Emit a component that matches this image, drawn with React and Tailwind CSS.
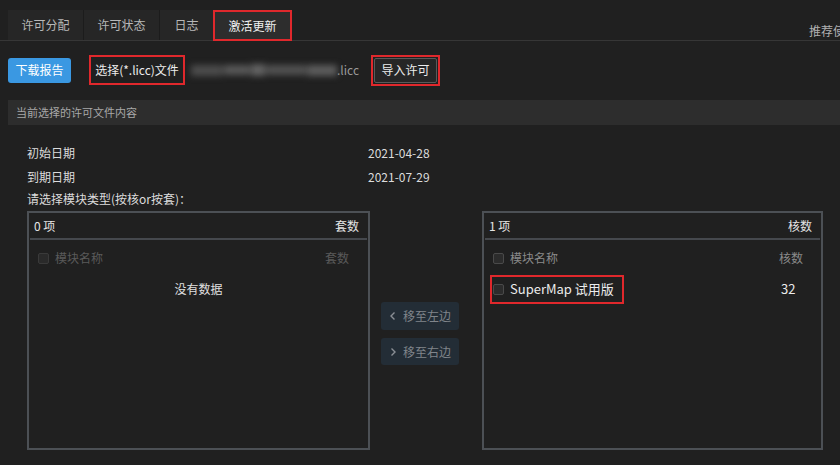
import React from "react";

const font = { fontFamily: '"Noto Sans CJK SC", "Noto Sans", sans-serif' };

function Check({ dim }) {
  return (
    <span
      className={`inline-block shrink-0 w-[11px] h-[11px] rounded-[2px] border ${
        dim ? "border-[#3a3a3a] bg-[#2a2a2a]" : "border-[#4a4a4a] bg-[#2c2c2c]"
      }`}
    />
  );
}

function Chevron({ dir }) {
  return (
    <svg width="8" height="10" viewBox="0 0 8 10" className="mr-[6px]">
      <path
        d={dir === "left" ? "M5.5 1.5 L2 5 L5.5 8.5" : "M2.5 1.5 L6 5 L2.5 8.5"}
        fill="none"
        stroke="#8a8f95"
        strokeWidth="1.4"
      />
    </svg>
  );
}

export default function App() {
  return (
    <div
      className="w-[840px] h-[465px] bg-[#202020] overflow-hidden text-[12px] text-[#dcdcdc]"
      style={font}
    >
      {/* Tabs */}
      <div className="pt-[10px] flex border-b border-[#363636] pl-2 whitespace-nowrap">
        <div className="flex bg-[#262626]">
          <div className="w-[76px] h-[30px] flex items-center justify-center text-[#b8b8b8] border-r border-[#1c1c1c]">
            许可分配
          </div>
          <div className="w-[76px] h-[30px] flex items-center justify-center text-[#b8b8b8] border-r border-[#1c1c1c]">
            许可状态
          </div>
          <div className="w-[53px] h-[30px] flex items-center justify-center text-[#b8b8b8]">
            日志
          </div>
          <div className="w-[79px] h-[31px] -mb-px flex items-center justify-center text-[#f0f0f0] bg-[#2d2d2d] border-2 border-[#e0282c]">
            激活更新
          </div>
        </div>
        <div className="ml-[517px] pt-[12px] text-[#b0b0b0] text-[12px]">推荐使用配置</div>
      </div>

      {/* Toolbar */}
      <div className="mt-[14px] flex items-center pl-2 h-[30px] whitespace-nowrap">
        <button className="w-[63px] h-[25px] rounded-[3px] bg-[#3a98e2] text-white text-[12px]">
          下载报告
        </button>
        <div className="ml-[18px] w-[96px] h-[30px] border-2 border-[#e0282c] flex items-center justify-center text-[#ececec]">
          选择(*.licc)文件
        </div>
        <div className="ml-[6px] w-[146px] h-[14px] flex items-center gap-[1px] blur-[3px]">
          <div className="w-[32px] h-[11px] bg-[#4c4c4c]" />
          <div className="w-[26px] h-[10px] bg-[#585858]" />
          <div className="w-[14px] h-[12px] bg-[#626262]" />
          <div className="w-[40px] h-[10px] bg-[#525252]" />
          <div className="w-[30px] h-[11px] bg-[#5c5c5c]" />
        </div>
        <span className="text-[#9a9a9a]">.licc</span>
        <div className="ml-[12px] w-[69px] h-[31px] border-2 border-[#e0282c] flex items-center justify-center">
          <div className="w-[63px] h-[25px] border border-[#5a5a5a] rounded-[2px] bg-[#262626] flex items-center justify-center text-[#ececec]">
            导入许可
          </div>
        </div>
      </div>

      {/* Section header */}
      <div className="mt-[15px] ml-2 h-[25px] bg-[#2d2d2d] flex items-center pl-[8px] text-[11px] text-[#a8a8a8]">
        当前选择的许可文件内容
      </div>

      {/* Dates */}
      <div className="pl-[27px] mt-[16px] text-[#dcdcdc]">
        <div className="flex h-[24px] items-center">
          <span className="w-[341px]">初始日期</span>
          <span>2021-04-28</span>
        </div>
        <div className="flex h-[24px] items-center">
          <span className="w-[341px]">到期日期</span>
          <span>2021-07-29</span>
        </div>
        <div className="h-[20px] flex items-center">请选择模块类型(按核or按套)：</div>
      </div>

      {/* Transfer */}
      <div className="flex pl-[27px] mt-[2px]">
        {/* Left box */}
        <div className="w-[343px] h-[239px] border-2 border-[#4c5055] flex flex-col">
          <div className="h-[25px] flex items-center justify-between pl-[5px] pr-[9px] text-[#e4e4e4]">
            <span>0 项</span>
            <span>套数</span>
          </div>
          <div className="mx-[1px] h-[2px] bg-[#45484d]" />
          <div className="h-[36px] flex items-center pl-[9px] pr-[19px] text-[#5a5a5a]">
            <Check dim />
            <span className="ml-[6px]">模块名称</span>
            <span className="ml-auto">套数</span>
          </div>
          <div className="h-[26px] flex items-center justify-center text-[#e0e0e0]">没有数据</div>
        </div>

        {/* Middle */}
        <div className="w-[112px] flex flex-col items-start pl-[11px] pt-[91px] gap-[8px]">
          <div className="w-[78px] h-[28px] rounded-[3px] bg-[#232d36] flex items-center justify-center text-[#80858b]">
            <Chevron dir="left" />
            移至左边
          </div>
          <div className="w-[78px] h-[27px] rounded-[3px] bg-[#232d36] flex items-center justify-center text-[#80858b]">
            <Chevron dir="right" />
            移至右边
          </div>
        </div>

        {/* Right box */}
        <div className="w-[341px] h-[239px] border-2 border-[#4c5055] flex flex-col">
          <div className="h-[25px] flex items-center justify-between pl-[5px] pr-[9px] text-[#e4e4e4]">
            <span>1 项</span>
            <span>核数</span>
          </div>
          <div className="mx-[1px] h-[2px] bg-[#45484d]" />
          <div className="h-[36px] flex items-center pl-[9px] pr-[18px] text-[#8a8a8a]">
            <Check />
            <span className="ml-[6px]">模块名称</span>
            <span className="ml-auto">核数</span>
          </div>
          <div className="flex items-center h-[26px] pl-[6px] pr-[18px]">
            <div className="w-[134px] h-[29px] border-2 border-[#e0282c] flex items-center pl-[1px]">
              <Check />
              <span className="ml-[6px] text-[13px] text-[#ececec]">SuperMap 试用版</span>
            </div>
            <span className="ml-auto w-[22px] text-[13px] text-[#ececec]">32</span>
          </div>
        </div>
      </div>
    </div>
  );
}
